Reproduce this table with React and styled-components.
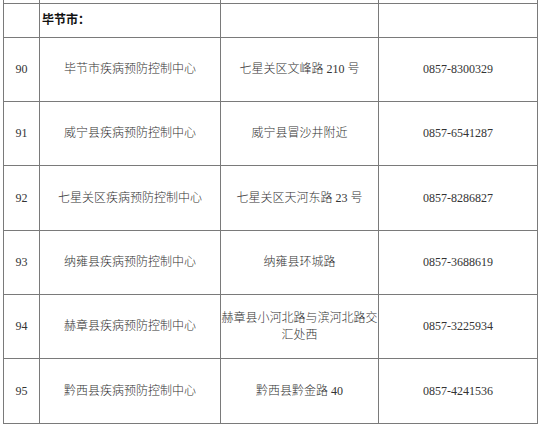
import React from "react";
import styled, { createGlobalStyle } from "styled-components";

const rows = [
  { no: "90", name: "毕节市疾病预防控制中心", addr: ["七星关区文峰路 210 号"], tel: "0857-8300329" },
  { no: "91", name: "威宁县疾病预防控制中心", addr: ["威宁县冒沙井附近"], tel: "0857-6541287" },
  { no: "92", name: "七星关区疾病预防控制中心", addr: ["七星关区天河东路 23 号"], tel: "0857-8286827" },
  { no: "93", name: "纳雍县疾病预防控制中心", addr: ["纳雍县环城路"], tel: "0857-3688619" },
  { no: "94", name: "赫章县疾病预防控制中心", addr: ["赫章县小河北路与滨河北路交", "汇处西"], tel: "0857-3225934" },
  { no: "95", name: "黔西县疾病预防控制中心", addr: ["黔西县黔金路 40"], tel: "0857-4241536" },
];

const heights = [64, 64, 65, 64, 64, 65];

const GlobalStyle = createGlobalStyle`
  html, body {
    margin: 0;
    padding: 0;
    background: #fff;
  }
  body {
    font-family: "Liberation Serif", "Noto Sans CJK SC", serif;
    color: #333;
  }
`;

const Page = styled.div`
  width: 542px;
  height: 427px;
  overflow: hidden;
  padding-left: 3px;
  box-sizing: border-box;
`;

const Grid = styled.div`
  display: grid;
  grid-template-columns: 36px 181px 158px 159px;
  width: 535px;
  border-left: 1px solid #7a7a7a;
  box-sizing: border-box;
`;

const Cell = styled.div`
  height: ${(p) => p.$h}px;
  box-sizing: border-box;
  border-right: 1px solid #7a7a7a;
  border-bottom: 1px solid #7a7a7a;
  display: flex;
  align-items: center;
  justify-content: ${(p) => (p.$left ? "flex-start" : "center")};
  padding-left: ${(p) => (p.$left ? "2px" : "0")};
  font-size: 12px;
  font-weight: 300;
  line-height: 17px;
  text-align: center;
  white-space: nowrap;
`;

const Title = styled.span`
  font-weight: 700;
  color: #111;
`;

export default function App() {
  return (
    <Page>
      <GlobalStyle />
      <Grid>
        <Cell $h={4} />
        <Cell $h={4} />
        <Cell $h={4} />
        <Cell $h={4} />

        <Cell $h={34} />
        <Cell $h={34} $left>
          <Title>毕节市：</Title>
        </Cell>
        <Cell $h={34} />
        <Cell $h={34} />

        {rows.map((r, i) => (
          <React.Fragment key={r.no}>
            <Cell $h={heights[i]}>{r.no}</Cell>
            <Cell $h={heights[i]}>{r.name}</Cell>
            <Cell $h={heights[i]}>
              <div>
                {r.addr.map((line) => (
                  <div key={line}>{line}</div>
                ))}
              </div>
            </Cell>
            <Cell $h={heights[i]}>{r.tel}</Cell>
          </React.Fragment>
        ))}
      </Grid>
    </Page>
  );
}
